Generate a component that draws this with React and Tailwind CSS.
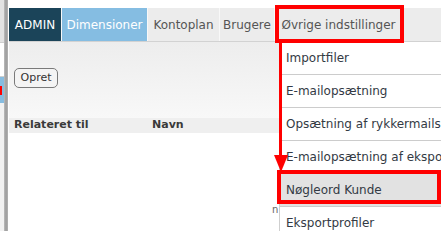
import React from 'react';

const menuItems = [
  'Importfiler',
  'E-mailopsætning',
  'Opsætning af rykkermails',
  'E-mailopsætning af eksportfiler',
  'Nøgleord Kunde',
  'Eksportprofiler',
];

function NavItem({ label, className }) {
  return (
    <div className={`h-full flex items-center justify-center whitespace-nowrap border-r border-[#f8f8f8] ${className}`}>
      {label}
    </div>
  );
}

export default function App() {
  return (
    <div className="w-[441px] h-[231px] overflow-hidden relative flex bg-white font-['DejaVu_Sans',Verdana,sans-serif]">
      {/* window edge on the left */}
      <div className="w-[4px] flex flex-col bg-[#ececec]">
        <div className="h-[42px] bg-[#e2e2e2]" />
        <div className="h-[35px] bg-white border-y border-[#cfcfcf]" />
        <div className="h-[26px] bg-[#86bce0] flex items-center">
          <div className="w-[2px] h-[9px] bg-[#ff0000]" />
        </div>
        <div className="flex-1 bg-[#f2f2f2]" />
      </div>
      <div className="w-[4px] bg-gradient-to-r from-[#bdbdbd] via-[#9c9c9c] to-[#b4b4b4]" />
      <div className="w-px bg-white" />

      <div className="flex-1 flex flex-col">
        <div className="h-[8px] bg-white" />
        <nav className="h-[34px] flex bg-[#ececec] border-b border-[#d2d2d2] text-[12px] text-[#555]">
          <NavItem label="ADMIN" className="w-[53px] bg-[#1b4459] text-white" />
          <NavItem label="Dimensioner" className="w-[86px] bg-[#85bde2] text-white" />
          <NavItem label="Kontoplan" className="w-[72px]" />
          <NavItem label="Brugere" className="w-[55px]" />
          <NavItem label="Øvrige indstillinger" className="w-[128px]" />
        </nav>
        <div className="h-[76px] bg-gradient-to-b from-[#ededed] to-[#f8f8f8] pl-[5px] pt-[26px]">
          <button className="h-[20px] w-[44px] rounded-[5px] border border-[#7a7a7a] bg-[#f4f4f4] text-[11px] text-[#333] flex items-center justify-center">
            Opret
          </button>
        </div>
        <div className="h-[15px] bg-[#efefef] flex items-center text-[11px] font-bold text-[#3a3a3a]">
          <span className="w-[143px] pl-[5px]">Relateret til</span>
          <span>Navn</span>
        </div>
        <div className="flex-1 bg-white" />
      </div>

      {/* dropdown menu */}
      <div className="absolute left-[279px] top-[42px] w-[170px] bg-white border-l border-[#cfcfcf] text-[12px] text-[#333a44]">
        {menuItems.map((item, i) => (
          <div
            key={item}
            className={`h-[33px] flex items-center pl-[6px] whitespace-nowrap border-b border-[#cccccc] ${i === 4 ? 'bg-[#e2e2e2]' : ''}`}
          >
            {item}
          </div>
        ))}
      </div>
      <span className="absolute left-[272px] top-[202px] text-[10px] text-[#666]">n</span>

      {/* red annotations */}
      <div className="absolute left-[275px] top-[5px] w-[129px] h-[38px] border-[4px] border-[#ff0000]" />
      <div className="absolute left-[279px] top-[43px] w-[3px] h-[114px] bg-[#ff0000]" />
      <svg className="absolute left-[274px] top-[155px]" width="14" height="17" viewBox="0 0 14 17">
        <polygon points="0,0 14,0 7,17" fill="#ff0000" />
      </svg>
      <div className="absolute left-[277px] top-[170px] w-[164px] h-[34px] border-[4px] border-[#ff0000]" />
    </div>
  );
}
